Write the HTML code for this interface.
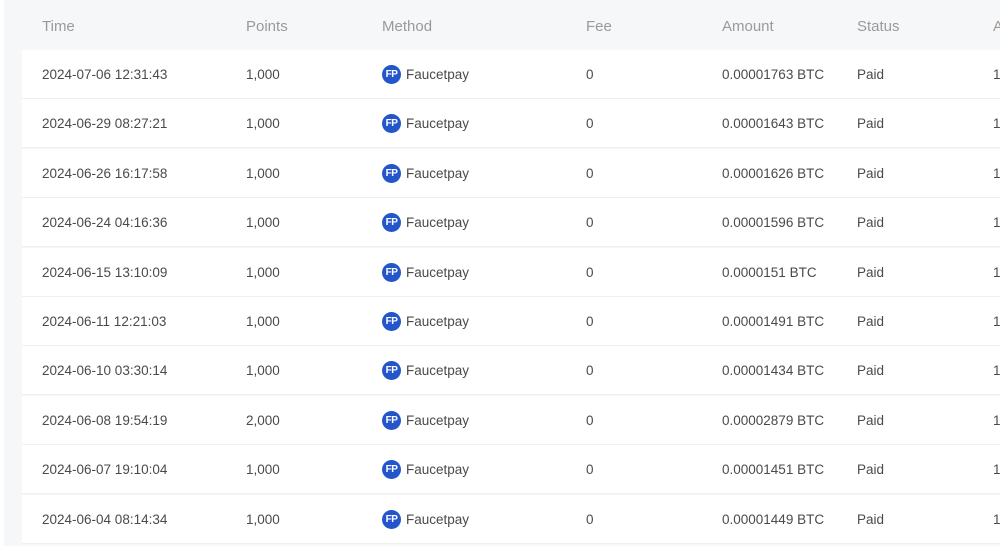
<!DOCTYPE html>
<html><head><meta charset="utf-8"><style>
body{margin:0;width:1000px;height:546px;overflow:hidden;background:#fff;font-family:"Liberation Sans",Arial,sans-serif;}
.wrap{position:absolute;left:4px;top:0;width:996px;height:546px;background:#f6f7f9;}
.h{position:absolute;top:18px;font-size:15px;color:#9a9a9a;}
.row{position:absolute;left:22px;width:978px;height:49px;background:#fff;border-bottom:1px solid #eef0f2;box-sizing:border-box;}
.c{position:absolute;top:17px;font-size:13.5px;color:#4a4a4a;white-space:nowrap;line-height:16px}
.m{position:absolute;left:360px;top:15px;height:19px;display:flex;align-items:center;font-size:13.5px;color:#4a4a4a;white-space:nowrap}
.ic{display:inline-block;width:19px;height:19px;border-radius:50%;background:#2455c9;color:#fff;font-size:10px;font-weight:bold;text-align:center;line-height:19px;margin-right:5px;letter-spacing:-0.5px}
</style></head><body>
<div class="wrap"></div>
<div class="h" style="left:42px">Time</div>
<div class="h" style="left:246px">Points</div>
<div class="h" style="left:382px">Method</div>
<div class="h" style="left:586px">Fee</div>
<div class="h" style="left:722px">Amount</div>
<div class="h" style="left:857px">Status</div>
<div class="h" style="left:993px">A</div>
<div id="rows"></div>
<script>
var d=[["2024-07-06 12:31:43","1,000","0.00001763"],["2024-06-29 08:27:21","1,000","0.00001643"],["2024-06-26 16:17:58","1,000","0.00001626"],["2024-06-24 04:16:36","1,000","0.00001596"],["2024-06-15 13:10:09","1,000","0.0000151"],["2024-06-11 12:21:03","1,000","0.00001491"],["2024-06-10 03:30:14","1,000","0.00001434"],["2024-06-08 19:54:19","2,000","0.00002879"],["2024-06-07 19:10:04","1,000","0.00001451"],["2024-06-04 08:14:34","1,000","0.00001449"]];
var h="";d.forEach(function(r,i){var t=50+i*49.4;
h+='<div class="row" style="top:'+t+'px"><div class="c" style="left:20px">'+r[0]+'</div><div class="c" style="left:224px">'+r[1]+'</div><div class="m"><span class="ic">FP</span>Faucetpay</div><div class="c" style="left:564px">0</div><div class="c" style="left:700px">'+r[2]+' BTC</div><div class="c" style="left:835px">Paid</div><div class="c" style="left:971px">1</div></div>';});
document.getElementById("rows").innerHTML=h;
</script>
</body></html>
